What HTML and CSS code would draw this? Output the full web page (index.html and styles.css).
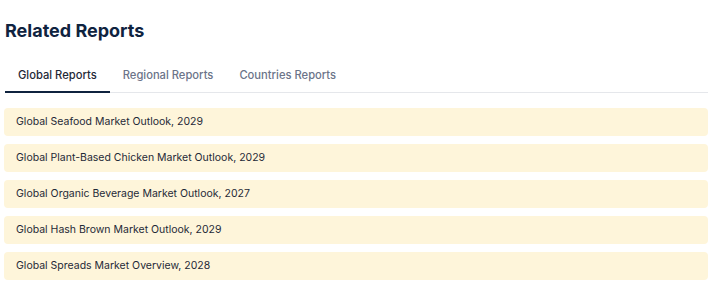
FILE: index.html
```
<!DOCTYPE html>
<html lang="en">

<head>
    <meta charset="UTF-8">
    <title>Related Reports</title>
    <link rel="stylesheet" href="styles.css">
</head>

<body>
    <!-- Related Reports -->
    <div class="related">
        <h2>Related Reports</h2>

        <!-- Tabs -->
        <div class="tabs">
            <button class="tab active">Global Reports</button>
            <button class="tab">Regional Reports</button>
            <button class="tab">Countries Reports</button>
        </div>

        <!-- Report List -->
        <div class="report-list">
            <a class="report" href="#">Global Seafood Market Outlook, 2029</a>
            <a class="report" href="#">Global Plant-Based Chicken Market Outlook, 2029</a>
            <a class="report" href="#">Global Organic Beverage Market Outlook, 2027</a>
            <a class="report" href="#">Global Hash Brown Market Outlook, 2029</a>
            <a class="report" href="#">Global Spreads Market Overview, 2028</a>
        </div>
    </div>
</body>

</html>
```

FILE: styles.css
```
/* Reset & Fonts */
* {
    margin: 0;
    padding: 0;
    box-sizing: border-box;
}

body {
    background-color: #ffffff;
    font-family: Inter, 'Liberation Sans', sans-serif;
    color: #1f2937;
}

.related {
    width: 704px;
    margin-left: 4px;
    padding-top: 19px;
}

.related h2 {
    font-size: 18px;
    font-weight: 700;
    color: #0f233f;
    line-height: 24px;
    margin-left: 1px;
}

/* Tabs */
.tabs {
    display: flex;
    margin-top: 19px;
    margin-left: 1px;
    border-bottom: 1px solid #e5e7eb;
}

.tab {
    background: none;
    border: none;
    border-bottom: 2px solid transparent;
    margin-bottom: -1px;
    padding: 6px 13px 9px;
    font-family: inherit;
    font-size: 11.2px;
    font-weight: 500;
    color: #6b7489;
    cursor: pointer;
}

.tab.active {
    color: #1f2937;
    border-bottom-color: #0f233f;
}

/* Report List */
.report-list {
    display: flex;
    flex-direction: column;
    gap: 8px;
    margin-top: 15px;
}

.report {
    display: block;
    background-color: #fef5da;
    border-radius: 4px;
    padding: 0 12px;
    height: 28px;
    line-height: 28px;
    font-size: 10.5px;
    color: #1f2937;
    text-decoration: none;
}
```
